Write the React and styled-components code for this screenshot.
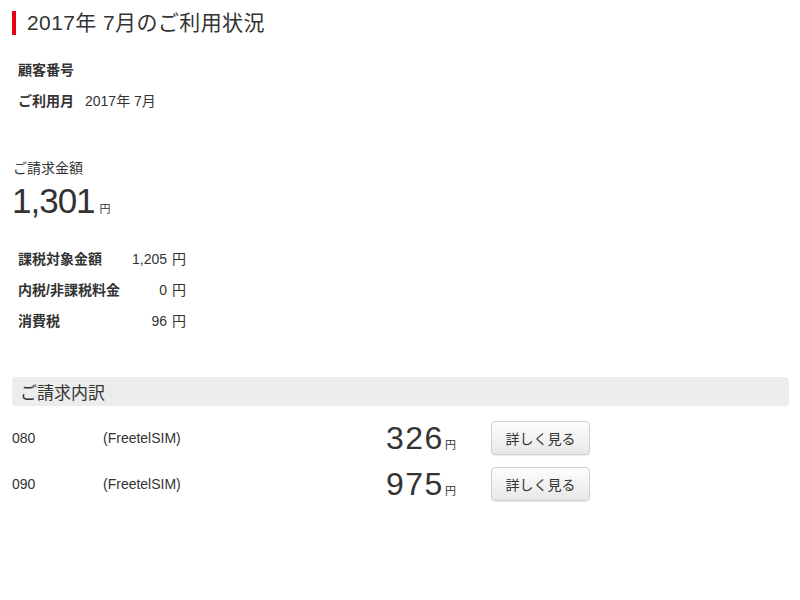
import React from 'react'
import styled, { createGlobalStyle } from 'styled-components'

const GlobalStyle = createGlobalStyle`
  body {
    margin: 0;
    background: #fff;
    color: #333;
    font-family: "Liberation Sans", Arial, "Noto Sans CJK JP", sans-serif;
  }
`

const Page = styled.div`
  width: 800px;
  height: 600px;
  box-sizing: border-box;
  padding: 11px 11px 0 12px;
`

const Title = styled.h1`
  margin: 0;
  font-size: 21px;
  font-weight: normal;
  letter-spacing: 0.4px;
  line-height: 24px;
  border-left: 4px solid #e60012;
  padding-left: 11px;
  color: #333;
`

const InfoList = styled.div`
  display: flex;
  flex-direction: column;
  gap: 15px;
  padding: 27px 0 0 6px;
`

const InfoRow = styled.div`
  display: flex;
  align-items: center;
  font-size: 14px;
  line-height: 16px;
`

const InfoLabel = styled.span`
  font-weight: bold;
  width: 67px;
`

const BillingLabel = styled.div`
  margin-top: 50px;
  padding-left: 1px;
  font-size: 14px;
  line-height: 18px;
`

const Amount = styled.div`
  display: flex;
  align-items: baseline;
  margin-top: 4px;
`

const BigNumber = styled.span`
  font-size: ${p => p.size}px;
  line-height: ${p => p.lh}px;
  letter-spacing: ${p => p.spacing || 0}px;
`

const Yen = styled.span`
  font-size: 11px;
  margin-left: ${p => p.gap}px;
`

const TaxTable = styled.div`
  display: grid;
  grid-template-columns: 100px 49px 19px;
  row-gap: 15px;
  margin: 30px 0 0 6px;
  font-size: 14px;
  line-height: 16px;
`

const TaxLabel = styled.span`
  font-weight: bold;
  white-space: nowrap;
`

const TaxValue = styled.span`
  text-align: right;
`

const TaxUnit = styled.span`
  padding-left: 5px;
`

const SectionHeader = styled.div`
  margin-top: 48px;
  background: #ececec;
  border-radius: 4px;
  height: 29px;
  display: flex;
  align-items: center;
  padding-left: 8px;
  font-size: 17px;
`

const DetailList = styled.div`
  display: flex;
  flex-direction: column;
  gap: 12px;
  margin-top: 15px;
`

const DetailRow = styled.div`
  display: grid;
  grid-template-columns: 91px 283px 105px auto;
  align-items: center;
  height: 34px;
  font-size: 14px;
`

const DetailAmount = styled.div`
  display: flex;
  align-items: baseline;
`

const DetailButton = styled.button`
  width: 99px;
  height: 34px;
  border: 1px solid #cfcfcf;
  border-radius: 4px;
  background: linear-gradient(#fdfdfd, #e8e8e8);
  box-shadow: 0 1px 1px rgba(0, 0, 0, 0.08);
  font-family: inherit;
  font-size: 14px;
  color: #333;
  padding: 0;
`

const details = [
  { line: '080', plan: '(FreetelSIM)', amount: '326' },
  { line: '090', plan: '(FreetelSIM)', amount: '975' },
]

const taxes = [
  ['課税対象金額', '1,205'],
  ['内税/非課税料金', '0'],
  ['消費税', '96'],
]

export default function App() {
  return (
    <Page>
      <GlobalStyle />
      <Title>2017年 7月のご利用状況</Title>

      <InfoList>
        <InfoRow><InfoLabel>顧客番号</InfoLabel></InfoRow>
        <InfoRow><InfoLabel>ご利用月</InfoLabel>2017年 7月</InfoRow>
      </InfoList>

      <BillingLabel>ご請求金額</BillingLabel>
      <Amount>
        <BigNumber size={35} lh={40} spacing={-1}>1,301</BigNumber>
        <Yen gap={5}>円</Yen>
      </Amount>

      <TaxTable>
        {taxes.map(([label, value]) => (
          <React.Fragment key={label}>
            <TaxLabel>{label}</TaxLabel>
            <TaxValue>{value}</TaxValue>
            <TaxUnit>円</TaxUnit>
          </React.Fragment>
        ))}
      </TaxTable>

      <SectionHeader>ご請求内訳</SectionHeader>

      <DetailList>
        {details.map(d => (
          <DetailRow key={d.line}>
            <span>{d.line}</span>
            <span>{d.plan}</span>
            <DetailAmount>
              <BigNumber size={32} lh={34} spacing={1.5}>{d.amount}</BigNumber>
              <Yen gap={1}>円</Yen>
            </DetailAmount>
            <DetailButton>詳しく見る</DetailButton>
          </DetailRow>
        ))}
      </DetailList>
    </Page>
  )
}
